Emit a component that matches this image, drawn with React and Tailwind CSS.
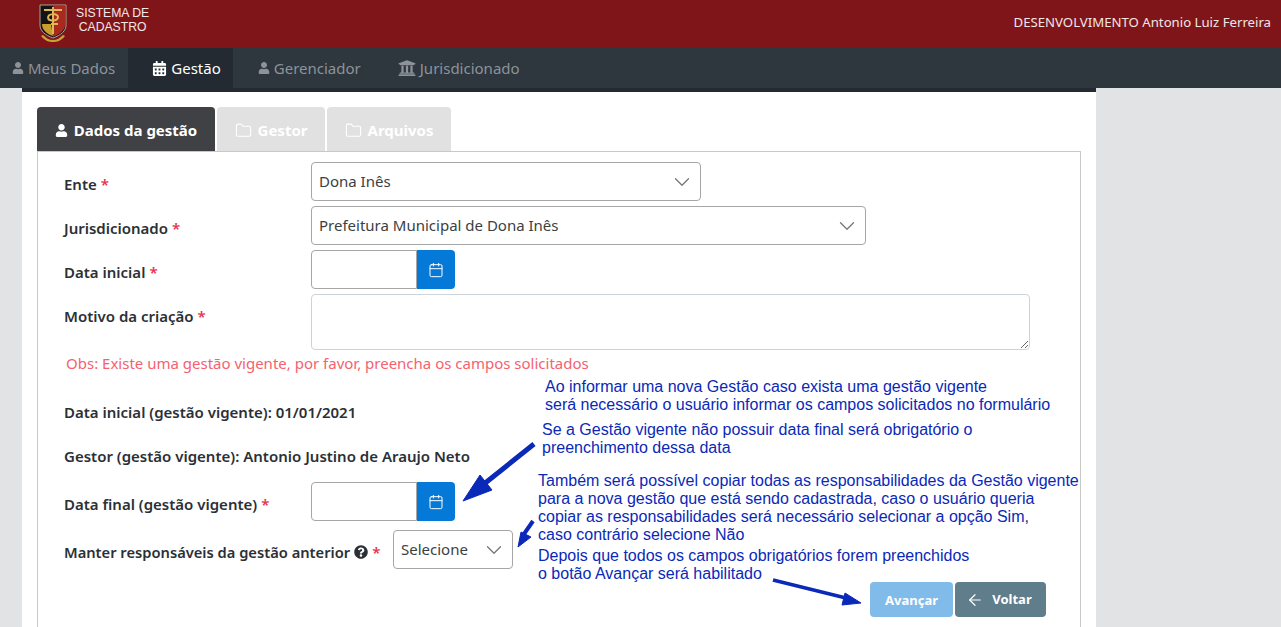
import React from 'react';
import { Calendar, ChevronDown, ArrowLeft, Folder } from 'lucide-react';
import { FaUser, FaCalendarAlt, FaUniversity, FaQuestionCircle } from 'react-icons/fa';

const ui = { fontFamily: '"Noto Sans", "Open Sans", sans-serif' };

function Logo() {
  return (
    <svg width="28" height="41" viewBox="0 0 28 41" className="shrink-0 mt-[2px]">
      <path d="M1 2h26v20c0 6-5 10-13 13C6 32 1 28 1 22z" fill="#141414" stroke="#a9a595" strokeWidth="1" />
      <path d="M14 3h12v19c0 5-5 9-12 12z" fill="#a82a1e" />
      <path d="M3 21h9l2 12c-6-2-11-6-11-12z" fill="#c99d2e" />
      <path d="M5 7h18M14 4v27M9 15c0-5 10-5 10-1s-9 5-10 1M12 21h7" stroke="#dcb955" strokeWidth="2" fill="none" />
      <path d="M2 33c4 5 8 6 12 6s8-1 12-6l-2-1c-3 3-6 5-10 5s-7-2-10-5z" fill="#c9a13c" />
    </svg>
  );
}

function Label({ children, width = 'w-[247px]', mt = 'mt-[11px]' }) {
  return <label className={`${width} ${mt} shrink-0 font-semibold text-[15px] leading-[22px] text-[#2b3036]`}>{children}</label>;
}

function Req() {
  return <span className="text-[#e8344e] ml-1">*</span>;
}

function FakeSelect({ value, width }) {
  return (
    <div className={`${width} h-[39px] border border-[#a6a6a6] rounded bg-white flex items-center justify-between pl-[7px] pr-[5px] text-[15px] text-[#3a3f44]`}>
      <span>{value}</span>
      <ChevronDown size={26} strokeWidth={1.2} className="text-[#777]" />
    </div>
  );
}

function DateInput() {
  return (
    <div className="flex h-[39px]">
      <div className="w-[106px] border border-[#a6a6a6] rounded-l bg-white"></div>
      <div className="w-[38px] bg-[#0479d8] rounded-r flex items-center justify-center">
        <Calendar size={16} strokeWidth={1.5} className="text-white" />
      </div>
    </div>
  );
}

function Tab({ icon, label, active, width }) {
  return (
    <div className={`${width} h-[44px] pt-[3px] rounded-t flex items-center justify-center gap-[6px] font-bold text-[15px] ${active ? 'bg-[#404145] text-white' : 'bg-[#e1e1e1] text-white'}`}>
      {icon}
      <span>{label}</span>
    </div>
  );
}

function Note({ className, children }) {
  return (
    <div className={`absolute text-[#0a29b8] text-[16px] leading-[18px] whitespace-pre ${className}`} style={{ fontFamily: '"Liberation Sans", Arial, sans-serif' }}>
      {children}
    </div>
  );
}

function Arrows() {
  return (
    <svg width="1281" height="627" className="absolute left-0 top-0 pointer-events-none">
      <g stroke="#0a29b8" fill="#0a29b8">
        <path d="M534 444L484 484" strokeWidth="5" fill="none" />
        <path d="M463 501L480 475L492 490z" strokeWidth="1" />
        <path d="M533 521L524 534" strokeWidth="4" fill="none" />
        <path d="M518 547L521 532L531 537z" strokeWidth="1" />
        <path d="M773 580L850 599" strokeWidth="3.5" fill="none" />
        <path d="M861 603L845 593L842 605z" strokeWidth="1" />
      </g>
    </svg>
  );
}

export default function App() {
  return (
    <div className="relative h-[627px] overflow-hidden bg-[#e2e3e5]" style={ui}>
      <header className="h-12 bg-[#7f1519] flex items-center justify-between pl-[39px] pr-[10px]">
        <div className="flex items-center gap-[9px] -mt-[3px]">
          <Logo />
          <div className="text-white/90 text-[12.2px] leading-[14px] text-center -mt-[6px]" style={{ fontFamily: '"Liberation Sans", Arial, sans-serif' }}>
            SISTEMA DE<br />CADASTRO
          </div>
        </div>
        <div className="text-[#f1e6e6] text-[13.2px] -mt-[2px]">DESENVOLVIMENTO Antonio Luiz Ferreira</div>
      </header>

      <nav className="h-10 bg-[#2e363e] flex text-[15px]">
        <div className="h-10 flex items-center gap-[4px] pl-[12px] pr-[13px] text-[#8d9399]">
          <FaUser size={12} />
          <span>Meus Dados</span>
        </div>
        <div className="h-10 flex items-center gap-[4px] pl-[24px] pr-[12px] bg-[#232a31] text-white">
          <FaCalendarAlt size={15} />
          <span>Gestão</span>
        </div>
        <div className="h-10 flex items-center gap-[4px] pl-[25px] pr-[12px] text-[#8d9399]">
          <FaUser size={12} />
          <span>Gerenciador</span>
        </div>
        <div className="h-10 flex items-center gap-[4px] pl-[25px] text-[#8d9399]">
          <FaUniversity size={18} />
          <span>Jurisdicionado</span>
        </div>
      </nav>

      <main className="ml-[22px] w-[1074px] h-[539px] bg-white border-t-4 border-[#232a31] pl-[15px] pt-[15px]">
        <div className="flex gap-[2px]">
          <Tab active width="w-[178px]" label="Dados da gestão" icon={<FaUser size={13} />} />
          <Tab width="w-[108px]" label="Gestor" icon={<Folder size={17} strokeWidth={1.5} />} />
          <Tab width="w-[124px]" label="Arquivos" icon={<Folder size={17} strokeWidth={1.5} />} />
        </div>

        <section className="w-[1044px] h-[480px] border border-[#c8c8c8] pl-[26px] pt-[10px]">
          <div className="flex flex-col gap-[5px]">
            <div className="flex">
              <Label>Ente<Req /></Label>
              <FakeSelect value="Dona Inês" width="w-[390px]" />
            </div>
            <div className="flex">
              <Label>Jurisdicionado<Req /></Label>
              <FakeSelect value="Prefeitura Municipal de Dona Inês" width="w-[555px]" />
            </div>
            <div className="flex">
              <Label>Data inicial<Req /></Label>
              <DateInput />
            </div>
            <div className="flex">
              <Label>Motivo da criação<Req /></Label>
              <textarea readOnly className="w-[719px] h-[56px] border border-[#ccd4da] rounded bg-white"></textarea>
            </div>
          </div>

          <p className="mt-[2px] ml-[2px] text-[15px] leading-[22px] text-[#f4626f]">Obs: Existe uma gestão vigente, por favor, preencha os campos solicitados</p>
          <p className="mt-[27px] font-semibold text-[15px] leading-[22px] text-[#2b3036]">Data inicial (gestão vigente): 01/01/2021</p>
          <p className="mt-[22px] font-semibold text-[15px] leading-[22px] text-[#2b3036]">Gestor (gestão vigente): Antonio Justino de Araujo Neto</p>

          <div className="flex mt-[15px]">
            <Label>Data final (gestão vigente)<Req /></Label>
            <DateInput />
          </div>
          <div className="flex items-start mt-[9px]">
            <Label width="w-[329px]">
              <span className="inline-flex items-center gap-1 text-[14.7px]">Manter responsáveis da gestão anterior <FaQuestionCircle size={14} className="text-[#2b3036]" /></span>
              <Req />
            </Label>
            <FakeSelect value="Selecione" width="w-[120px]" />
          </div>

          <div className="flex justify-end gap-[2px] mt-[13px] pr-[34px]">
            <button className="w-[83px] h-[35px] pt-[2px] bg-[#80bbea] rounded text-white font-bold text-[13px]">Avançar</button>
            <button className="w-[91px] h-[35px] pt-[1px] pr-[3px] bg-[#607d8b] rounded text-white font-bold text-[13px] flex items-center justify-center gap-2">
              <ArrowLeft size={18} strokeWidth={1.6} />
              Voltar
            </button>
          </div>
        </section>
      </main>

      <Arrows />
      <Note className="left-[545px] top-[378px]">{'Ao informar uma nova Gestão caso exista uma gestão vigente\nserá necessário o usuário informar os campos solicitados no formulário'}</Note>
      <Note className="left-[542px] top-[421px]">{'Se a Gestão vigente não possuir data final será obrigatório o\npreenchimento dessa data'}</Note>
      <Note className="left-[538px] top-[472px]">{'Também será possível copiar todas as responsabilidades da Gestão vigente\npara a nova gestão que está sendo cadastrada, caso o usuário queria\ncopiar as responsabilidades será necessário selecionar a opção Sim,\ncaso contrário selecione Não'}</Note>
      <Note className="left-[538px] top-[547px]">{'Depois que todos os campos obrigatórios forem preenchidos\no botão Avançar será habilitado'}</Note>
    </div>
  );
}
